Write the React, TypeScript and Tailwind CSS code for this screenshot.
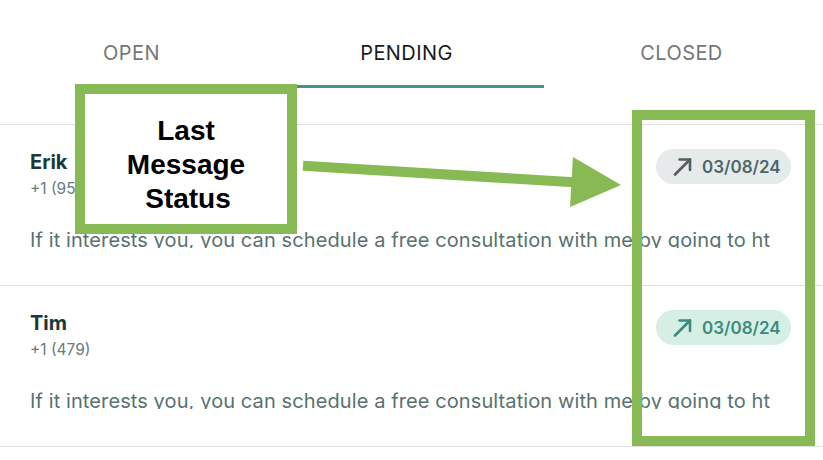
const tabs = ['OPEN', 'PENDING', 'CLOSED'];

const rows = [
  { name: 'Erik', phone: '+1 (954)', date: '03/08/24', tone: 'gray' },
  { name: 'Tim', phone: '+1 (479)', date: '03/08/24', tone: 'green' },
];

const message = 'If it interests you, you can schedule a free consultation with me by going to ht';

function NorthEast({ color }: { color: string }) {
  return (
    <svg width="20" height="19" viewBox="0 0 20 19" fill="none">
      <path d="M2 17.5 L17 2.5" stroke={color} strokeWidth="2.6" strokeLinecap="round" />
      <path d="M6.5 2.5 H17 V13" stroke={color} strokeWidth="2.6" strokeLinecap="round" strokeLinejoin="round" />
    </svg>
  );
}

export default function App() {
  return (
    <div className="relative w-[823px] h-[460px] overflow-hidden bg-white font-['Inter',sans-serif]">
      <div className="h-[125px] border-b border-[#e0e0e0] overflow-hidden">
        <div className="ml-[-3px] w-[825px] flex">
          {tabs.map((t) => (
            <div key={t} className="w-[275px] flex flex-col items-center pt-[41px]">
              <span
                className={
                  'pr-[6px] text-[20px] leading-[24px] tracking-[0.4px] ' +
                  (t === 'PENDING' ? 'text-[#1a1a1a]' : 'text-[#767676]')
                }
              >
                {t}
              </span>
              <div
                className={
                  'mt-[20px] h-[3px] w-[269px] ' + (t === 'PENDING' ? 'bg-[#46918a]' : 'bg-transparent')
                }
              />
            </div>
          ))}
        </div>
      </div>

      {rows.map((r) => (
        <div key={r.name} className="h-[161px] border-b border-[#e0e0e0] pl-[30px] pr-[32px] pt-[25px]">
          <div className="flex justify-between">
            <div className="flex flex-col">
              <span className="text-[20px] leading-[24px] font-bold text-[#1c3938]">{r.name}</span>
              <span className="mt-[5px] text-[15.5px] leading-[20px] text-[#647d7c]">{r.phone}</span>
            </div>
            <div
              className={
                'mt-[-1px] h-[35px] w-[135px] rounded-full flex items-center pl-[17px] gap-[9px] ' +
                (r.tone === 'gray' ? 'bg-[#e7eaeb]' : 'bg-[#d6efe5]')
              }
            >
              <NorthEast color={r.tone === 'gray' ? '#575c5d' : '#3d8b7c'} />
              <span
                className={
                  'text-[17px] leading-[20px] font-semibold ' +
                  (r.tone === 'gray' ? 'text-[#4c6768]' : 'text-[#3d8b7c]')
                }
              >
                {r.date}
              </span>
            </div>
          </div>
          <div className="mt-[29px] h-[20px] overflow-hidden whitespace-nowrap text-[20px] leading-[24px] tracking-[0.1px] text-[#58716f]">
            {message}
          </div>
        </div>
      ))}

      {/* annotation overlay */}
      <div className="absolute left-[75px] top-[84px] w-[222px] h-[150px] border-[10px] border-[#87b955] bg-white flex items-center justify-center">
        <p className="mt-[12px] text-center font-['Liberation_Sans',Arial,sans-serif] font-bold text-[28px] leading-[34px] text-black">
          Last
          <br />
          Message
          <br />
          <span className="pl-[4px]">Status</span>
        </p>
      </div>
      <div className="absolute left-[632px] top-[110px] w-[183px] h-[336px] border-[10px] border-[#87b955]" />
      <svg className="absolute left-0 top-0" width="823" height="460" viewBox="0 0 823 460">
        <path d="M303 165.7 L574 182.3" stroke="#87b955" strokeWidth="10" />
        <polygon points="573,157 621,185 570,207" fill="#87b955" />
      </svg>
    </div>
  );
}
